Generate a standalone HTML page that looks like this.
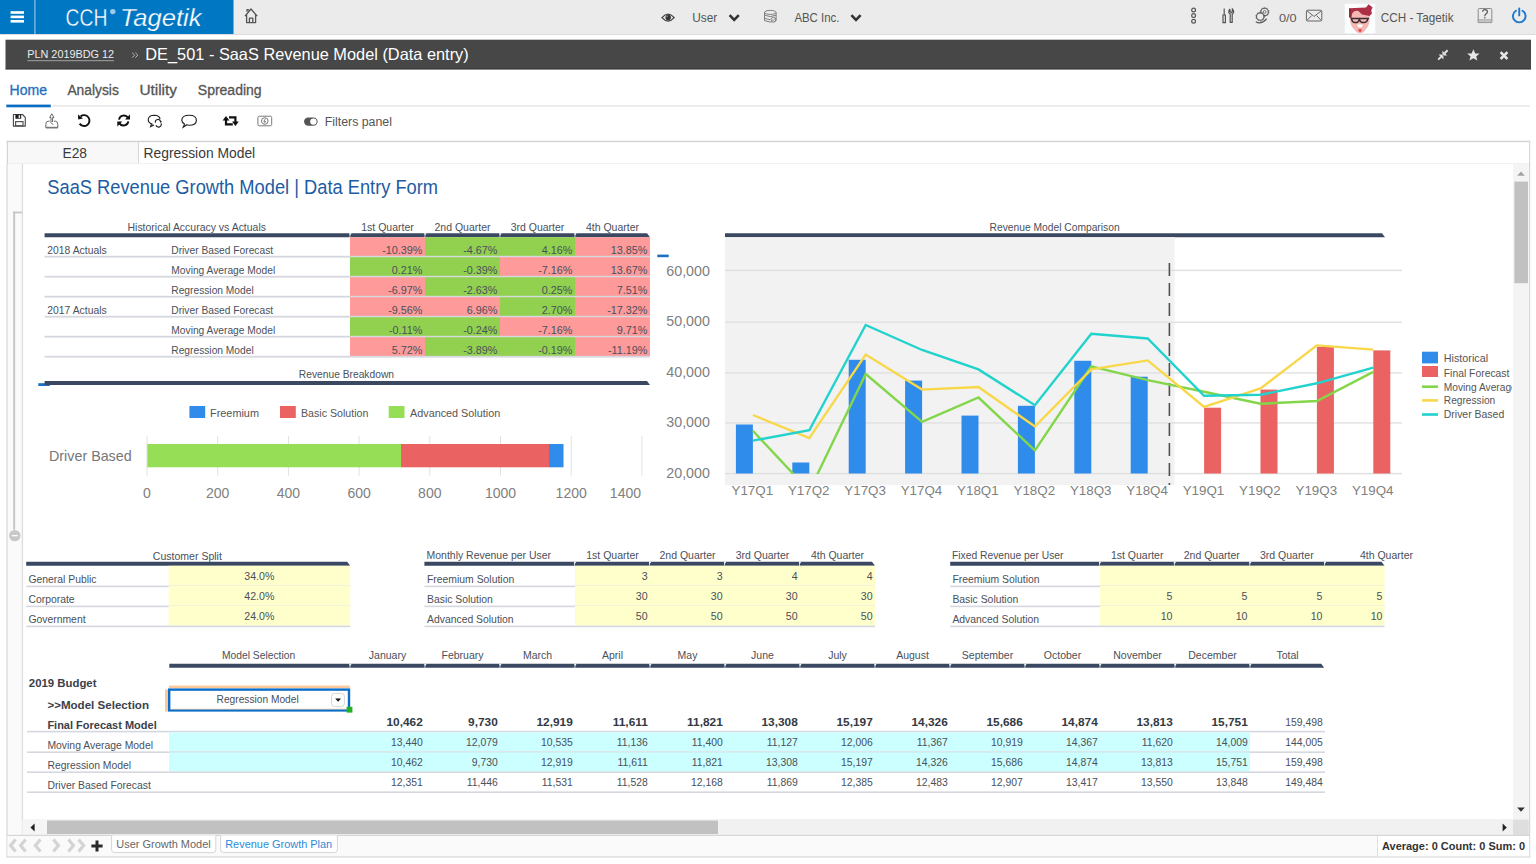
<!DOCTYPE html>
<html><head><meta charset="utf-8"><title>CCH Tagetik - SaaS Revenue Model</title>
<style>
html,body{margin:0;padding:0;background:#fff;overflow:hidden;width:1536px;height:864px}
svg{display:block;font-family:"Liberation Sans",sans-serif}
</style></head><body>
<svg width="1536" height="864" viewBox="0 0 1536 864">
<rect x="0" y="0" width="1536" height="34" fill="#ebebeb" />
<rect x="0" y="34" width="1536" height="1" fill="#dcdcdc" />
<rect x="0" y="0" width="233.5" height="34" fill="#0077c3" />
<rect x="34.2" y="0" width="1.4" height="34" fill="#7fb8e2" />
<rect x="10.6" y="11.2" width="13.4" height="2.6" fill="#ffffff" />
<rect x="10.6" y="15.6" width="13.4" height="2.6" fill="#ffffff" />
<rect x="10.6" y="20.0" width="13.4" height="2.6" fill="#ffffff" />
<text x="65.5" y="26" font-size="23.5" fill="#ffffff" textLength="41.9" lengthAdjust="spacingAndGlyphs" stroke="#0077c3" stroke-width="0.4">CCH</text>
<circle cx="112.8" cy="11.6" r="2.7" fill="#9ccbed"/>
<text x="120" y="26" font-size="23.5" fill="#ffffff" font-style="italic" textLength="81.6" lengthAdjust="spacingAndGlyphs" stroke="#0077c3" stroke-width="0.25">Tagetik</text>
<path d="M245 16.2 L251 9 L257.2 16.2 M246.6 14.4 V22.6 H255.6 V14.4 M249.4 22.6 V18.2 H252.8 V22.6 M247 11.8 V9.6 H248.4 V10.6" fill="none" stroke="#555" stroke-width="1.3" stroke-linejoin="round"/>
<path d="M662 17.6 Q668 10.8 674.2 17.6 Q668 24.4 662 17.6 Z" fill="#ebebeb" stroke="#444" stroke-width="1.3"/><circle cx="668.2" cy="17.4" r="2.7" fill="#333"/><circle cx="667.2" cy="16.4" r="0.8" fill="#888"/>
<text x="692.3" y="21.5" font-size="12.2" fill="#555" textLength="25" lengthAdjust="spacingAndGlyphs" >User</text>
<path d="M729.6 15.2 L734.2 19.8 L738.8 15.2" fill="none" stroke="#333" stroke-width="2.6"/>
<g fill="none" stroke="#777" stroke-width="0.95"><ellipse cx="770.3" cy="12.4" rx="5.8" ry="2"/><path d="M764.5 12.4 V20.6 Q770.3 23.6 776.1 20.6 V12.4 M764.5 15.2 Q770.3 18 776.1 15.2 M764.5 18 Q767 19.4 770 19.6"/><circle cx="773.4" cy="19.8" r="2.4" fill="#ebebeb"/><path d="M772.2 19.9 L773.2 20.8 L774.8 18.8" stroke-width="0.8"/></g>
<text x="794.4" y="21.5" font-size="12.2" fill="#555" textLength="45" lengthAdjust="spacingAndGlyphs" >ABC Inc.</text>
<path d="M851.4 15.2 L856 19.8 L860.6 15.2" fill="none" stroke="#333" stroke-width="2.6"/>
<g fill="none" stroke="#555" stroke-width="1.2"><circle cx="1193.6" cy="10" r="1.9"/><circle cx="1193.6" cy="15.6" r="1.9"/><circle cx="1193.6" cy="21.2" r="1.9"/></g>
<g fill="none" stroke="#555" stroke-width="1.2"><path d="M1224.2 8.5 V15 M1223 15 H1225.4 V22.6 H1223 Z"/><path d="M1230 9 V11.5 L1231.2 12.6 L1232.4 11.5 V9 Q1234 10.5 1233.6 12.6 L1232.2 14 V22.4 H1230.2 V14 L1228.8 12.6 Q1228.4 10.5 1230 9"/></g>
<g fill="none" stroke="#5a5a5a"><circle cx="1264.6" cy="11.9" r="3.7" stroke-width="1.1"/><circle cx="1264.6" cy="11.9" r="4.3" stroke-width="0.9" stroke-dasharray="1.3 1.4"/><circle cx="1264.6" cy="11.9" r="1.4" stroke-width="0.8"/><circle cx="1260.2" cy="16.6" r="3.7" stroke-width="1.1" fill="#ebebeb"/><circle cx="1260.2" cy="16.6" r="4.3" stroke-width="0.9" stroke-dasharray="1.3 1.4"/><path d="M1255.8 21.8 Q1261 25 1266.6 18.8" stroke-width="1.3"/></g>
<text x="1279" y="21.5" font-size="11.8" fill="#5a5a5a" textLength="17.7" lengthAdjust="spacingAndGlyphs" >0/0</text>
<g fill="none" stroke="#666" stroke-width="1"><rect x="1306.4" y="10.2" width="15.4" height="10.8" rx="1.2"/><path d="M1306.8 10.8 L1314.1 16.4 L1321.4 10.8 M1306.8 20.6 L1311.6 15.6 M1321.4 20.6 L1316.6 15.6"/></g>
<g><rect x="1344.8" y="3.8" width="30.4" height="29.5" fill="#fbfdfe"/>
<path d="M1350 10 H1369.8 V16 Q1370 25 1366 29 Q1363.4 33.4 1360 33.4 Q1357 33.4 1354 29 Q1349.6 26 1350 16 Z" fill="#f5b7b4"/>
<path d="M1349.4 8.2 L1366 7.6 L1368.6 4.2 L1372.6 7.6 L1371.2 10.6 L1372 13.6 L1369.4 16 L1362 14.6 L1358.4 11 Q1354 10.2 1352 14 L1351.4 18.4 L1349.6 17.6 Z" fill="#ad2f45"/>
<path d="M1349.8 8.4 V17.6" stroke="#5a2a1e" stroke-width="1.2"/>
<path d="M1350.6 18.6 H1369 M1351.6 18.8 Q1352 22.8 1355.4 22.6 Q1358.8 22.6 1359.4 18.8 Q1360 22.6 1363.6 22.6 Q1367 22.6 1367.8 18.8" fill="none" stroke="#3b2b33" stroke-width="1.5"/>
<path d="M1357 24.6 H1363 Q1362.6 27.4 1360 27.6 Q1357.4 27.4 1357 24.6 Z" fill="#fff"/>
<path d="M1358 29.4 Q1360 28.6 1362 29.4 Q1361.4 32 1360 32 Q1358.6 32 1358 29.4 Z" fill="#e8484e"/></g>
<text x="1380.8" y="21.7" font-size="12.2" fill="#555" textLength="72.7" lengthAdjust="spacingAndGlyphs" >CCH - Tagetik</text>
<rect x="1478.2" y="8.5" width="13.6" height="14" rx="1" fill="none" stroke="#8a8a8a" stroke-width="1"/><rect x="1477.8" y="19.3" width="14.4" height="3.8" fill="#a0a0a0"/><rect x="1479" y="20.2" width="12.4" height="1.6" fill="#c8ccd0"/>
<path d="M1482.6 11.6 Q1482.8 9.6 1485 9.6 Q1487.4 9.6 1487.4 11.8 Q1487.4 13.4 1485.6 14.2 Q1484.8 14.8 1484.8 16.2" fill="none" stroke="#555" stroke-width="1.2"/><circle cx="1484.8" cy="17.8" r="0.75" fill="#555"/>
<g fill="none" stroke="#1a78cf" stroke-width="1.9" stroke-linecap="round"><path d="M1516 10.7 A6.3 6.3 0 1 0 1522.5 10.7"/><path d="M1519.25 8.4 V15.4"/></g>
<rect x="5.5" y="39.7" width="1525.5" height="29.6" fill="#474747" />
<rect x="5.5" y="68.5" width="1525.5" height="0.9" fill="#333333" />
<text x="27.3" y="58" font-size="10.9" fill="#ececec" textLength="86.7" lengthAdjust="spacingAndGlyphs" >PLN 2019BDG 12</text>
<rect x="27.3" y="60.1" width="86.7" height="1.1" fill="#9a9a9a" />
<path d="M132.2 52.8 L134.6 55.2 L132.2 57.6 M135.4 52.8 L137.8 55.2 L135.4 57.6" fill="none" stroke="#bbb" stroke-width="1"/>
<text x="145.3" y="60.3" font-size="16.5" fill="#ffffff" textLength="323.4" lengthAdjust="spacingAndGlyphs" >DE_501 - SaaS Revenue Model (Data entry)</text>
<g stroke="#e2e2e2" stroke-width="2"><path d="M1447.6 50.2 L1444.6 53.2 M1438.2 59.6 L1441.2 56.6"/></g><path d="M1442.4 50.8 L1442.4 55.6 L1447.2 55.6 Z M1438.6 54.6 L1443.4 54.6 L1443.4 59.4 Z" fill="#e2e2e2"/>
<path d="M1473.4 49.2 L1475.2 53.4 L1479.6 53.6 L1476.2 56.4 L1477.4 60.6 L1473.4 58.2 L1469.4 60.6 L1470.6 56.4 L1467.2 53.6 L1471.6 53.4 Z" fill="#e8e8e8"/>
<path d="M1500.6 52.2 L1507.4 59 M1507.4 52.2 L1500.6 59" stroke="#e6e6e6" stroke-width="2.6"/>
<text x="9.5" y="94.6" font-size="14" fill="#1f6fbf" textLength="37.5" lengthAdjust="spacingAndGlyphs" stroke="#1f6fbf" stroke-width="0.3">Home</text>
<text x="67.4" y="94.6" font-size="14" fill="#555555" textLength="51.4" lengthAdjust="spacingAndGlyphs" stroke="#555" stroke-width="0.3">Analysis</text>
<text x="139.4" y="94.6" font-size="14" fill="#555555" textLength="37.6" lengthAdjust="spacingAndGlyphs" stroke="#555" stroke-width="0.3">Utility</text>
<text x="197.8" y="94.6" font-size="14" fill="#555555" textLength="63.8" lengthAdjust="spacingAndGlyphs" stroke="#555" stroke-width="0.3">Spreading</text>
<rect x="52" y="105" width="1478" height="2" fill="#ececec" />
<rect x="6.3" y="104.6" width="44.5" height="2.7" fill="#0a6dc2" />
<path d="M13.4 114.5 H22.4 L25.3 117.4 V126.1 H13.4 Z" fill="none" stroke="#444" stroke-width="1.1" stroke-linejoin="round"/><rect x="15.4" y="114.6" width="5.8" height="4.1" fill="#1a1a1a"/><rect x="18.6" y="115.3" width="1.5" height="2.6" fill="#fff"/><rect x="15.6" y="121.6" width="7.4" height="4.2" fill="none" stroke="#555" stroke-width="1.2"/>
<g fill="none" stroke="#666" stroke-width="1"><path d="M51.8 113.8 L49.7 117.6 L51 117.6 L51 122.6 L53.2 124.8 M51.8 113.8 L53.9 117.6 L52.6 117.6 L52.6 122"/><path d="M49.6 121.2 H48 Q45.8 121.4 45.8 124.6 V127.6 H57.8 V124.6 Q57.8 121.4 55.6 121.2 H54"/></g><rect x="45.8" y="126.8" width="12" height="1.6" fill="#777"/>
<g fill="none" stroke="#111" stroke-width="1.9"><path d="M80.6 116.4 A5.4 5.4 0 1 1 79.6 123.6"/></g><path d="M78 114.4 L78.2 119.6 L83 118.6 Z" fill="#111"/>
<g fill="none" stroke="#111" stroke-width="1.9"><path d="M119 119.6 A5 5 0 0 1 128 117.6"/><path d="M128.4 121.4 A5 5 0 0 1 119.4 123.4"/></g><path d="M130 114.4 V119.6 H125 Z M117.3 126.6 V121.4 H122.3 Z" fill="#111"/>
<g fill="none" stroke="#222" stroke-width="1.15"><path d="M152.6 124.4 Q148.2 123 148.2 119.8 Q148.4 115.2 154.4 115.2 Q159.8 115.4 160 119"/><path d="M151.4 124.2 L150.6 126.6 L154 125"/><path d="M155.4 122.6 A2.6 2.6 0 0 1 160.6 121.6 M161.2 123.4 A2.6 2.6 0 0 1 156 125.2"/></g><path d="M159.6 120.4 L161.8 121.2 L160.6 123.2 Z" fill="#222"/>
<g fill="none" stroke="#222" stroke-width="1.15"><path d="M184.6 124 Q181.8 122.6 181.8 120.2 Q181.8 115.2 189.2 115.2 Q196.4 115.2 196.4 120.2 Q196.4 125.2 189.2 125.2 Q187.2 125.2 185.8 124.8"/><path d="M184.6 124 L183.2 127.2 L186.6 125"/></g>
<g fill="none" stroke="#111" stroke-width="2.2"><path d="M226 119.4 V124.4 H232.8 M229 117.3 H235.4 V122.2"/></g><path d="M222.6 120.4 L226 116 L229.4 120.4 Z M232 121.6 L235.4 126 L238.8 121.6 Z" fill="#111"/>
<g fill="none" stroke="#7a7a7a" stroke-width="1"><rect x="257.9" y="116.2" width="13.8" height="9.6" rx="1.4"/><circle cx="264.8" cy="121" r="3.3"/></g><path d="M265.4 118.8 L263.8 121.4 H265.6 L264.2 123.4" fill="none" stroke="#666" stroke-width="0.8"/>
<rect x="304" y="117.4" width="13.6" height="8.4" rx="4.2" fill="#555"/><circle cx="313.4" cy="121.6" r="3.2" fill="#fff"/>
<text x="324.7" y="126.1" font-size="12.3" fill="#555" textLength="67.3" lengthAdjust="spacingAndGlyphs" >Filters panel</text>
<rect x="7" y="141" width="1523" height="23" fill="#ffffff" />
<rect x="8" y="142.2" width="130" height="21.2" fill="#f8f8f8" />
<rect x="6.8" y="140.7" width="1523.5" height="1.5" fill="#d3d3d3" />
<rect x="6.8" y="140.7" width="1.2" height="24" fill="#d3d3d3" />
<rect x="6.8" y="163.7" width="1523.5" height="1.3" fill="#d3d3d3" />
<rect x="138" y="142" width="1" height="21.4" fill="#d8d8d8" />
<text x="62.5" y="157.8" font-size="14.6" fill="#3a3a3a" textLength="24.5" lengthAdjust="spacingAndGlyphs" >E28</text>
<text x="143.5" y="157.8" font-size="14.2" fill="#3a3a3a" textLength="111.7" lengthAdjust="spacingAndGlyphs" >Regression Model</text>
<rect x="7" y="164" width="1523" height="693" fill="#ffffff" />
<rect x="7" y="164" width="15.5" height="671" fill="#fafafa" />
<rect x="6.4" y="164" width="1.3" height="693" fill="#dadada" />
<rect x="21.8" y="164" width="1.3" height="671" fill="#dcdcdc" />
<rect x="1529" y="141" width="1.2" height="716" fill="#d8d8d8" />
<rect x="13.2" y="211.6" width="8.6" height="1.8" fill="#c6c6c6" />
<rect x="13.2" y="211.6" width="1.9" height="318" fill="#c6c6c6" />
<circle cx="14.8" cy="535.6" r="5.7" fill="#c8c8c8"/>
<rect x="11.8" y="535" width="6" height="1.3" fill="#ffffff" />
<text x="47.3" y="194.2" font-size="19.3" fill="#1d5ca2" textLength="390.8" lengthAdjust="spacingAndGlyphs" >SaaS Revenue Growth Model | Data Entry Form</text>
<text x="127.5" y="231" font-size="10.5" fill="#4a505a" textLength="138.5" lengthAdjust="spacingAndGlyphs" >Historical Accuracy vs Actuals</text>
<text x="387.5" y="231" font-size="10.5" fill="#4a505a" text-anchor="middle" textLength="52.5" lengthAdjust="spacingAndGlyphs" >1st Quarter</text>
<text x="462.5" y="231" font-size="10.5" fill="#4a505a" text-anchor="middle" textLength="56.0" lengthAdjust="spacingAndGlyphs" >2nd Quarter</text>
<text x="537.5" y="231" font-size="10.5" fill="#4a505a" text-anchor="middle" textLength="53.7" lengthAdjust="spacingAndGlyphs" >3rd Quarter</text>
<text x="612.5" y="231" font-size="10.5" fill="#4a505a" text-anchor="middle" textLength="53.1" lengthAdjust="spacingAndGlyphs" >4th Quarter</text>
<polygon points="44.6,233.2 647,233.2 650,237.2 44.6,237.2" fill="#3a4862"/>
<polygon points="349.5,233.2 351.6,233.2 350.6,234.79999999999998 349.5,234.79999999999998" fill="#fff"/>
<rect x="349.5" y="233.2" width="0.9" height="4" fill="#ffffff" opacity="0.8"/>
<polygon points="424.5,233.2 426.6,233.2 425.6,234.79999999999998 424.5,234.79999999999998" fill="#fff"/>
<rect x="424.5" y="233.2" width="0.9" height="4" fill="#ffffff" opacity="0.8"/>
<polygon points="499.5,233.2 501.6,233.2 500.6,234.79999999999998 499.5,234.79999999999998" fill="#fff"/>
<rect x="499.5" y="233.2" width="0.9" height="4" fill="#ffffff" opacity="0.8"/>
<polygon points="574.5,233.2 576.6,233.2 575.6,234.79999999999998 574.5,234.79999999999998" fill="#fff"/>
<rect x="574.5" y="233.2" width="0.9" height="4" fill="#ffffff" opacity="0.8"/>
<rect x="350" y="237.2" width="75" height="19.2" fill="#ff9a9a" />
<rect x="425" y="237.2" width="75" height="19.2" fill="#92d050" />
<rect x="500" y="237.2" width="75" height="19.2" fill="#92d050" />
<rect x="575" y="237.2" width="75" height="19.2" fill="#ff9a9a" />
<rect x="44.6" y="255.79999999999998" width="605.4" height="1.8" fill="#d5d8de" />
<text x="47.3" y="254.2" font-size="10.4" fill="#4a505a" textLength="59.4" lengthAdjust="spacingAndGlyphs" >2018 Actuals</text>
<text x="171.3" y="254.2" font-size="10.4" fill="#4a505a" textLength="101.8" lengthAdjust="spacingAndGlyphs" >Driver Based Forecast</text>
<text x="422.4" y="254.2" font-size="10.8" fill="#4a505a" text-anchor="end" >-10.39%</text>
<text x="497.4" y="254.2" font-size="10.8" fill="#4a505a" text-anchor="end" >-4.67%</text>
<text x="572.4" y="254.2" font-size="10.8" fill="#4a505a" text-anchor="end" >4.16%</text>
<text x="647.4" y="254.2" font-size="10.8" fill="#4a505a" text-anchor="end" >13.85%</text>
<rect x="350" y="257.2" width="75" height="19.2" fill="#92d050" />
<rect x="425" y="257.2" width="75" height="19.2" fill="#92d050" />
<rect x="500" y="257.2" width="75" height="19.2" fill="#ff9a9a" />
<rect x="575" y="257.2" width="75" height="19.2" fill="#ff9a9a" />
<rect x="44.6" y="275.8" width="605.4" height="1.8" fill="#d5d8de" />
<text x="171.3" y="274.2" font-size="10.4" fill="#4a505a" textLength="103.9" lengthAdjust="spacingAndGlyphs" >Moving Average Model</text>
<text x="422.4" y="274.2" font-size="10.8" fill="#4a505a" text-anchor="end" >0.21%</text>
<text x="497.4" y="274.2" font-size="10.8" fill="#4a505a" text-anchor="end" >-0.39%</text>
<text x="572.4" y="274.2" font-size="10.8" fill="#4a505a" text-anchor="end" >-7.16%</text>
<text x="647.4" y="274.2" font-size="10.8" fill="#4a505a" text-anchor="end" >13.67%</text>
<rect x="350" y="277.2" width="75" height="19.2" fill="#ff9a9a" />
<rect x="425" y="277.2" width="75" height="19.2" fill="#92d050" />
<rect x="500" y="277.2" width="75" height="19.2" fill="#92d050" />
<rect x="575" y="277.2" width="75" height="19.2" fill="#ff9a9a" />
<rect x="44.6" y="295.8" width="605.4" height="1.8" fill="#d5d8de" />
<text x="171.3" y="294.2" font-size="10.4" fill="#4a505a" textLength="82.4" lengthAdjust="spacingAndGlyphs" >Regression Model</text>
<text x="422.4" y="294.2" font-size="10.8" fill="#4a505a" text-anchor="end" >-6.97%</text>
<text x="497.4" y="294.2" font-size="10.8" fill="#4a505a" text-anchor="end" >-2.63%</text>
<text x="572.4" y="294.2" font-size="10.8" fill="#4a505a" text-anchor="end" >0.25%</text>
<text x="647.4" y="294.2" font-size="10.8" fill="#4a505a" text-anchor="end" >7.51%</text>
<rect x="350" y="297.2" width="75" height="19.2" fill="#ff9a9a" />
<rect x="425" y="297.2" width="75" height="19.2" fill="#ff9a9a" />
<rect x="500" y="297.2" width="75" height="19.2" fill="#92d050" />
<rect x="575" y="297.2" width="75" height="19.2" fill="#ff9a9a" />
<rect x="44.6" y="315.8" width="605.4" height="1.8" fill="#d5d8de" />
<text x="47.3" y="314.2" font-size="10.4" fill="#4a505a" textLength="59.4" lengthAdjust="spacingAndGlyphs" >2017 Actuals</text>
<text x="171.3" y="314.2" font-size="10.4" fill="#4a505a" textLength="101.8" lengthAdjust="spacingAndGlyphs" >Driver Based Forecast</text>
<text x="422.4" y="314.2" font-size="10.8" fill="#4a505a" text-anchor="end" >-9.56%</text>
<text x="497.4" y="314.2" font-size="10.8" fill="#4a505a" text-anchor="end" >6.96%</text>
<text x="572.4" y="314.2" font-size="10.8" fill="#4a505a" text-anchor="end" >2.70%</text>
<text x="647.4" y="314.2" font-size="10.8" fill="#4a505a" text-anchor="end" >-17.32%</text>
<rect x="350" y="317.2" width="75" height="19.2" fill="#92d050" />
<rect x="425" y="317.2" width="75" height="19.2" fill="#92d050" />
<rect x="500" y="317.2" width="75" height="19.2" fill="#ff9a9a" />
<rect x="575" y="317.2" width="75" height="19.2" fill="#ff9a9a" />
<rect x="44.6" y="335.8" width="605.4" height="1.8" fill="#d5d8de" />
<text x="171.3" y="334.2" font-size="10.4" fill="#4a505a" textLength="103.9" lengthAdjust="spacingAndGlyphs" >Moving Average Model</text>
<text x="422.4" y="334.2" font-size="10.8" fill="#4a505a" text-anchor="end" >-0.11%</text>
<text x="497.4" y="334.2" font-size="10.8" fill="#4a505a" text-anchor="end" >-0.24%</text>
<text x="572.4" y="334.2" font-size="10.8" fill="#4a505a" text-anchor="end" >-7.16%</text>
<text x="647.4" y="334.2" font-size="10.8" fill="#4a505a" text-anchor="end" >9.71%</text>
<rect x="350" y="337.2" width="75" height="19.2" fill="#ff9a9a" />
<rect x="425" y="337.2" width="75" height="19.2" fill="#92d050" />
<rect x="500" y="337.2" width="75" height="19.2" fill="#92d050" />
<rect x="575" y="337.2" width="75" height="19.2" fill="#ff9a9a" />
<rect x="44.6" y="355.8" width="605.4" height="1.8" fill="#d5d8de" />
<text x="171.3" y="354.2" font-size="10.4" fill="#4a505a" textLength="82.4" lengthAdjust="spacingAndGlyphs" >Regression Model</text>
<text x="422.4" y="354.2" font-size="10.8" fill="#4a505a" text-anchor="end" >5.72%</text>
<text x="497.4" y="354.2" font-size="10.8" fill="#4a505a" text-anchor="end" >-3.89%</text>
<text x="572.4" y="354.2" font-size="10.8" fill="#4a505a" text-anchor="end" >-0.19%</text>
<text x="647.4" y="354.2" font-size="10.8" fill="#4a505a" text-anchor="end" >-11.19%</text>
<rect x="657.3" y="254.6" width="11.4" height="2.6" fill="#1c6fc2" />
<rect x="38.3" y="383.2" width="11.5" height="2.8" fill="#1c6fc2" />
<text x="298.8" y="378.2" font-size="10.4" fill="#4a505a" textLength="95.2" lengthAdjust="spacingAndGlyphs" >Revenue Breakdown</text>
<polygon points="44.6,381 647,381 650,385 44.6,385" fill="#3a4862"/>
<rect x="189.4" y="406" width="15.8" height="12" fill="#2f8ceb" />
<text x="210" y="416.7" font-size="10.9" fill="#555" textLength="49" lengthAdjust="spacingAndGlyphs" >Freemium</text>
<rect x="280" y="406" width="15.8" height="12" fill="#ea6262" />
<text x="301" y="416.7" font-size="10.9" fill="#555" textLength="67.3" lengthAdjust="spacingAndGlyphs" >Basic Solution</text>
<rect x="388.7" y="406" width="15.8" height="12" fill="#97de57" />
<text x="410" y="416.7" font-size="10.9" fill="#555" textLength="90.2" lengthAdjust="spacingAndGlyphs" >Advanced Solution</text>
<rect x="146.5" y="436" width="1" height="39.6" fill="#e2e2e2" />
<rect x="217.2" y="436" width="1" height="39.6" fill="#e2e2e2" />
<rect x="287.9" y="436" width="1" height="39.6" fill="#e2e2e2" />
<rect x="358.6" y="436" width="1" height="39.6" fill="#e2e2e2" />
<rect x="429.3" y="436" width="1" height="39.6" fill="#e2e2e2" />
<rect x="500.0" y="436" width="1" height="39.6" fill="#e2e2e2" />
<rect x="570.7" y="436" width="1" height="39.6" fill="#e2e2e2" />
<rect x="641.4000000000001" y="436" width="1" height="39.6" fill="#e2e2e2" />
<rect x="147.3" y="444" width="253.7" height="23.3" fill="#97de57" />
<rect x="401" y="444" width="148" height="23.3" fill="#ea6262" />
<rect x="549" y="444" width="14.5" height="23.3" fill="#2f8ceb" />
<text x="49" y="460.6" font-size="14.3" fill="#777" textLength="82.7" lengthAdjust="spacingAndGlyphs" >Driver Based</text>
<text x="147.0" y="497.5" font-size="14" fill="#808080" text-anchor="middle" >0</text>
<text x="217.7" y="497.5" font-size="14" fill="#808080" text-anchor="middle" >200</text>
<text x="288.4" y="497.5" font-size="14" fill="#808080" text-anchor="middle" >400</text>
<text x="359.1" y="497.5" font-size="14" fill="#808080" text-anchor="middle" >600</text>
<text x="429.8" y="497.5" font-size="14" fill="#808080" text-anchor="middle" >800</text>
<text x="500.5" y="497.5" font-size="14" fill="#808080" text-anchor="middle" >1000</text>
<text x="571.2" y="497.5" font-size="14" fill="#808080" text-anchor="middle" >1200</text>
<text x="641" y="497.5" font-size="14" fill="#808080" text-anchor="end" >1400</text>
<text x="152.8" y="559.5" font-size="10.5" fill="#4a505a" textLength="69.1" lengthAdjust="spacingAndGlyphs" >Customer Split</text>
<polygon points="26.2,561.8 347.2,561.8 350.2,565.8 26.2,565.8" fill="#3a4862"/>
<rect x="168.7" y="565.8" width="181.5" height="19.8" fill="#ffffcc" />
<rect x="26.2" y="585.5999999999999" width="324" height="1.6" fill="#d5d8de" />
<text x="28.4" y="583.1999999999999" font-size="10.4" fill="#4a505a" >General Public</text>
<text x="259.3" y="580.3" font-size="10.6" fill="#4a505a" text-anchor="middle" >34.0%</text>
<rect x="168.7" y="585.8" width="181.5" height="19.8" fill="#ffffcc" />
<rect x="26.2" y="605.5999999999999" width="324" height="1.6" fill="#d5d8de" />
<text x="28.4" y="603.1999999999999" font-size="10.4" fill="#4a505a" >Corporate</text>
<text x="259.3" y="600.3" font-size="10.6" fill="#4a505a" text-anchor="middle" >42.0%</text>
<rect x="168.7" y="605.8" width="181.5" height="19.8" fill="#ffffcc" />
<rect x="26.2" y="625.5999999999999" width="324" height="1.6" fill="#d5d8de" />
<text x="28.4" y="623.1999999999999" font-size="10.4" fill="#4a505a" >Government</text>
<text x="259.3" y="620.3" font-size="10.6" fill="#4a505a" text-anchor="middle" >24.0%</text>
<text x="426.6" y="559" font-size="10.4" fill="#4a505a" textLength="124.4" lengthAdjust="spacingAndGlyphs" >Monthly Revenue per User</text>
<text x="612.5" y="559" font-size="10.5" fill="#4a505a" text-anchor="middle" >1st Quarter</text>
<text x="687.5" y="559" font-size="10.5" fill="#4a505a" text-anchor="middle" >2nd Quarter</text>
<text x="762.5" y="559" font-size="10.5" fill="#4a505a" text-anchor="middle" >3rd Quarter</text>
<text x="837.5" y="559" font-size="10.5" fill="#4a505a" text-anchor="middle" >4th Quarter</text>
<polygon points="424.4,561.8 872,561.8 875,565.8 424.4,565.8" fill="#3a4862"/>
<polygon points="574.1,561.8 576.2,561.8 575.2,563.4 574.1,563.4" fill="#fff"/>
<rect x="574.1" y="561.8" width="0.9" height="4" fill="#ffffff" opacity="0.8"/>
<polygon points="649.1,561.8 651.2,561.8 650.2,563.4 649.1,563.4" fill="#fff"/>
<rect x="649.1" y="561.8" width="0.9" height="4" fill="#ffffff" opacity="0.8"/>
<polygon points="724.1,561.8 726.2,561.8 725.2,563.4 724.1,563.4" fill="#fff"/>
<rect x="724.1" y="561.8" width="0.9" height="4" fill="#ffffff" opacity="0.8"/>
<polygon points="799.1,561.8 801.2,561.8 800.2,563.4 799.1,563.4" fill="#fff"/>
<rect x="799.1" y="561.8" width="0.9" height="4" fill="#ffffff" opacity="0.8"/>
<rect x="575" y="565.8" width="300" height="19.8" fill="#ffffcc" />
<rect x="424.4" y="585.5999999999999" width="450.6" height="1.6" fill="#d5d8de" />
<text x="427" y="583.0" font-size="10.4" fill="#4a505a" >Freemium Solution</text>
<text x="647.6" y="580.0999999999999" font-size="10.6" fill="#4a505a" text-anchor="end" >3</text>
<text x="722.6" y="580.0999999999999" font-size="10.6" fill="#4a505a" text-anchor="end" >3</text>
<text x="797.6" y="580.0999999999999" font-size="10.6" fill="#4a505a" text-anchor="end" >4</text>
<text x="872.6" y="580.0999999999999" font-size="10.6" fill="#4a505a" text-anchor="end" >4</text>
<rect x="575" y="585.8" width="300" height="19.8" fill="#ffffcc" />
<rect x="424.4" y="605.5999999999999" width="450.6" height="1.6" fill="#d5d8de" />
<text x="427" y="603.0" font-size="10.4" fill="#4a505a" >Basic Solution</text>
<text x="647.6" y="600.0999999999999" font-size="10.6" fill="#4a505a" text-anchor="end" >30</text>
<text x="722.6" y="600.0999999999999" font-size="10.6" fill="#4a505a" text-anchor="end" >30</text>
<text x="797.6" y="600.0999999999999" font-size="10.6" fill="#4a505a" text-anchor="end" >30</text>
<text x="872.6" y="600.0999999999999" font-size="10.6" fill="#4a505a" text-anchor="end" >30</text>
<rect x="575" y="605.8" width="300" height="19.8" fill="#ffffcc" />
<rect x="424.4" y="625.5999999999999" width="450.6" height="1.6" fill="#d5d8de" />
<text x="427" y="623.0" font-size="10.4" fill="#4a505a" >Advanced Solution</text>
<text x="647.6" y="620.0999999999999" font-size="10.6" fill="#4a505a" text-anchor="end" >50</text>
<text x="722.6" y="620.0999999999999" font-size="10.6" fill="#4a505a" text-anchor="end" >50</text>
<text x="797.6" y="620.0999999999999" font-size="10.6" fill="#4a505a" text-anchor="end" >50</text>
<text x="872.6" y="620.0999999999999" font-size="10.6" fill="#4a505a" text-anchor="end" >50</text>
<text x="952" y="559" font-size="10.4" fill="#4a505a" textLength="111.5" lengthAdjust="spacingAndGlyphs" >Fixed Revenue per User</text>
<text x="1137.2" y="559" font-size="10.5" fill="#4a505a" text-anchor="middle" >1st Quarter</text>
<text x="1211.8" y="559" font-size="10.5" fill="#4a505a" text-anchor="middle" >2nd Quarter</text>
<text x="1286.8" y="559" font-size="10.5" fill="#4a505a" text-anchor="middle" >3rd Quarter</text>
<text x="1386.5" y="559" font-size="10.5" fill="#4a505a" text-anchor="middle" >4th Quarter</text>
<polygon points="950.2,561.8 1381.5,561.8 1384.5,565.8 950.2,565.8" fill="#3a4862"/>
<polygon points="1099.1,561.8 1101.1999999999998,561.8 1100.1999999999998,563.4 1099.1,563.4" fill="#fff"/>
<rect x="1099.1" y="561.8" width="0.9" height="4" fill="#ffffff" opacity="0.8"/>
<polygon points="1173.9,561.8 1176.0,561.8 1175.0,563.4 1173.9,563.4" fill="#fff"/>
<rect x="1173.9" y="561.8" width="0.9" height="4" fill="#ffffff" opacity="0.8"/>
<polygon points="1249.3,561.8 1251.3999999999999,561.8 1250.3999999999999,563.4 1249.3,563.4" fill="#fff"/>
<rect x="1249.3" y="561.8" width="0.9" height="4" fill="#ffffff" opacity="0.8"/>
<polygon points="1324.1,561.8 1326.1999999999998,561.8 1325.1999999999998,563.4 1324.1,563.4" fill="#fff"/>
<rect x="1324.1" y="561.8" width="0.9" height="4" fill="#ffffff" opacity="0.8"/>
<rect x="1100" y="565.8" width="284.5" height="19.8" fill="#ffffcc" />
<rect x="950.2" y="585.5999999999999" width="434.3" height="1.6" fill="#d5d8de" />
<text x="952.4" y="583.0" font-size="10.4" fill="#4a505a" >Freemium Solution</text>
<rect x="1100" y="585.8" width="284.5" height="19.8" fill="#ffffcc" />
<rect x="950.2" y="605.5999999999999" width="434.3" height="1.6" fill="#d5d8de" />
<text x="952.4" y="603.0" font-size="10.4" fill="#4a505a" >Basic Solution</text>
<text x="1172.5" y="600.0999999999999" font-size="10.6" fill="#4a505a" text-anchor="end" >5</text>
<text x="1247.5" y="600.0999999999999" font-size="10.6" fill="#4a505a" text-anchor="end" >5</text>
<text x="1322.5" y="600.0999999999999" font-size="10.6" fill="#4a505a" text-anchor="end" >5</text>
<text x="1382.5" y="600.0999999999999" font-size="10.6" fill="#4a505a" text-anchor="end" >5</text>
<rect x="1100" y="605.8" width="284.5" height="19.8" fill="#ffffcc" />
<rect x="950.2" y="625.5999999999999" width="434.3" height="1.6" fill="#d5d8de" />
<text x="952.4" y="623.0" font-size="10.4" fill="#4a505a" >Advanced Solution</text>
<text x="1172.5" y="620.0999999999999" font-size="10.6" fill="#4a505a" text-anchor="end" >10</text>
<text x="1247.5" y="620.0999999999999" font-size="10.6" fill="#4a505a" text-anchor="end" >10</text>
<text x="1322.5" y="620.0999999999999" font-size="10.6" fill="#4a505a" text-anchor="end" >10</text>
<text x="1382.5" y="620.0999999999999" font-size="10.6" fill="#4a505a" text-anchor="end" >10</text>
<text x="258.6" y="659" font-size="10.5" fill="#4a505a" text-anchor="middle" textLength="73.2" lengthAdjust="spacingAndGlyphs" >Model Selection</text>
<text x="387.5" y="659" font-size="10.5" fill="#4a505a" text-anchor="middle" >January</text>
<text x="462.5" y="659" font-size="10.5" fill="#4a505a" text-anchor="middle" >February</text>
<text x="537.5" y="659" font-size="10.5" fill="#4a505a" text-anchor="middle" >March</text>
<text x="612.5" y="659" font-size="10.5" fill="#4a505a" text-anchor="middle" >April</text>
<text x="687.5" y="659" font-size="10.5" fill="#4a505a" text-anchor="middle" >May</text>
<text x="762.5" y="659" font-size="10.5" fill="#4a505a" text-anchor="middle" >June</text>
<text x="837.5" y="659" font-size="10.5" fill="#4a505a" text-anchor="middle" >July</text>
<text x="912.5" y="659" font-size="10.5" fill="#4a505a" text-anchor="middle" >August</text>
<text x="987.5" y="659" font-size="10.5" fill="#4a505a" text-anchor="middle" >September</text>
<text x="1062.5" y="659" font-size="10.5" fill="#4a505a" text-anchor="middle" >October</text>
<text x="1137.5" y="659" font-size="10.5" fill="#4a505a" text-anchor="middle" >November</text>
<text x="1212.5" y="659" font-size="10.5" fill="#4a505a" text-anchor="middle" >December</text>
<text x="1287.5" y="659" font-size="10.5" fill="#4a505a" text-anchor="middle" >Total</text>
<polygon points="169.3,663.8 1321.2,663.8 1324.2,667.8 169.3,667.8" fill="#3a4862"/>
<polygon points="349.5,663.8 351.6,663.8 350.6,665.4 349.5,665.4" fill="#fff"/>
<rect x="349.5" y="663.8" width="0.9" height="4" fill="#ffffff" opacity="0.8"/>
<polygon points="424.5,663.8 426.6,663.8 425.6,665.4 424.5,665.4" fill="#fff"/>
<rect x="424.5" y="663.8" width="0.9" height="4" fill="#ffffff" opacity="0.8"/>
<polygon points="499.5,663.8 501.6,663.8 500.6,665.4 499.5,665.4" fill="#fff"/>
<rect x="499.5" y="663.8" width="0.9" height="4" fill="#ffffff" opacity="0.8"/>
<polygon points="574.5,663.8 576.6,663.8 575.6,665.4 574.5,665.4" fill="#fff"/>
<rect x="574.5" y="663.8" width="0.9" height="4" fill="#ffffff" opacity="0.8"/>
<polygon points="649.5,663.8 651.6,663.8 650.6,665.4 649.5,665.4" fill="#fff"/>
<rect x="649.5" y="663.8" width="0.9" height="4" fill="#ffffff" opacity="0.8"/>
<polygon points="724.5,663.8 726.6,663.8 725.6,665.4 724.5,665.4" fill="#fff"/>
<rect x="724.5" y="663.8" width="0.9" height="4" fill="#ffffff" opacity="0.8"/>
<polygon points="799.5,663.8 801.6,663.8 800.6,665.4 799.5,665.4" fill="#fff"/>
<rect x="799.5" y="663.8" width="0.9" height="4" fill="#ffffff" opacity="0.8"/>
<polygon points="874.5,663.8 876.6,663.8 875.6,665.4 874.5,665.4" fill="#fff"/>
<rect x="874.5" y="663.8" width="0.9" height="4" fill="#ffffff" opacity="0.8"/>
<polygon points="949.5,663.8 951.6,663.8 950.6,665.4 949.5,665.4" fill="#fff"/>
<rect x="949.5" y="663.8" width="0.9" height="4" fill="#ffffff" opacity="0.8"/>
<polygon points="1024.5,663.8 1026.6,663.8 1025.6,665.4 1024.5,665.4" fill="#fff"/>
<rect x="1024.5" y="663.8" width="0.9" height="4" fill="#ffffff" opacity="0.8"/>
<polygon points="1099.5,663.8 1101.6,663.8 1100.6,665.4 1099.5,665.4" fill="#fff"/>
<rect x="1099.5" y="663.8" width="0.9" height="4" fill="#ffffff" opacity="0.8"/>
<polygon points="1174.5,663.8 1176.6,663.8 1175.6,665.4 1174.5,665.4" fill="#fff"/>
<rect x="1174.5" y="663.8" width="0.9" height="4" fill="#ffffff" opacity="0.8"/>
<polygon points="1249.5,663.8 1251.6,663.8 1250.6,665.4 1249.5,665.4" fill="#fff"/>
<rect x="1249.5" y="663.8" width="0.9" height="4" fill="#ffffff" opacity="0.8"/>
<text x="28.8" y="687.4" font-size="11.2" fill="#3a414b" font-weight="bold" textLength="67.7" lengthAdjust="spacingAndGlyphs" >2019 Budget</text>
<text x="47.4" y="709.4" font-size="11.2" fill="#3a414b" font-weight="bold" textLength="101.6" lengthAdjust="spacingAndGlyphs" >&gt;&gt;Model Selection</text>
<text x="47.4" y="728.7" font-size="11.2" fill="#3a414b" font-weight="bold" textLength="109.3" lengthAdjust="spacingAndGlyphs" >Final Forecast Model</text>
<text x="422.8" y="725.7" font-size="10.8" fill="#333a44" text-anchor="end" font-weight="bold" textLength="36.3" lengthAdjust="spacingAndGlyphs" >10,462</text>
<text x="497.8" y="725.7" font-size="10.8" fill="#333a44" text-anchor="end" font-weight="bold" textLength="29.7" lengthAdjust="spacingAndGlyphs" >9,730</text>
<text x="572.8" y="725.7" font-size="10.8" fill="#333a44" text-anchor="end" font-weight="bold" textLength="36.3" lengthAdjust="spacingAndGlyphs" >12,919</text>
<text x="647.8" y="725.7" font-size="10.8" fill="#333a44" text-anchor="end" font-weight="bold" textLength="35.0" lengthAdjust="spacingAndGlyphs" >11,611</text>
<text x="722.8" y="725.7" font-size="10.8" fill="#333a44" text-anchor="end" font-weight="bold" textLength="35.7" lengthAdjust="spacingAndGlyphs" >11,821</text>
<text x="797.8" y="725.7" font-size="10.8" fill="#333a44" text-anchor="end" font-weight="bold" textLength="36.3" lengthAdjust="spacingAndGlyphs" >13,308</text>
<text x="872.8" y="725.7" font-size="10.8" fill="#333a44" text-anchor="end" font-weight="bold" textLength="36.3" lengthAdjust="spacingAndGlyphs" >15,197</text>
<text x="947.8" y="725.7" font-size="10.8" fill="#333a44" text-anchor="end" font-weight="bold" textLength="36.3" lengthAdjust="spacingAndGlyphs" >14,326</text>
<text x="1022.8" y="725.7" font-size="10.8" fill="#333a44" text-anchor="end" font-weight="bold" textLength="36.3" lengthAdjust="spacingAndGlyphs" >15,686</text>
<text x="1097.8" y="725.7" font-size="10.8" fill="#333a44" text-anchor="end" font-weight="bold" textLength="36.3" lengthAdjust="spacingAndGlyphs" >14,874</text>
<text x="1172.8" y="725.7" font-size="10.8" fill="#333a44" text-anchor="end" font-weight="bold" textLength="36.3" lengthAdjust="spacingAndGlyphs" >13,813</text>
<text x="1247.8" y="725.7" font-size="10.8" fill="#333a44" text-anchor="end" font-weight="bold" textLength="36.3" lengthAdjust="spacingAndGlyphs" >15,751</text>
<text x="1322.8" y="725.7" font-size="10.4" fill="#4a505a" text-anchor="end" >159,498</text>
<rect x="27" y="730.8" width="1298" height="1.6" fill="#d5d8de" />
<rect x="169" y="732.4" width="1081" height="19" fill="#ccffff" />
<rect x="27" y="751.4" width="1298" height="1.6" fill="#d5d8de" />
<text x="47.4" y="749.0" font-size="10.4" fill="#4a505a" textLength="105.6" lengthAdjust="spacingAndGlyphs" >Moving Average Model</text>
<text x="422.8" y="746.1999999999999" font-size="10.4" fill="#4a505a" text-anchor="end" >13,440</text>
<text x="497.8" y="746.1999999999999" font-size="10.4" fill="#4a505a" text-anchor="end" >12,079</text>
<text x="572.8" y="746.1999999999999" font-size="10.4" fill="#4a505a" text-anchor="end" >10,535</text>
<text x="647.8" y="746.1999999999999" font-size="10.4" fill="#4a505a" text-anchor="end" >11,136</text>
<text x="722.8" y="746.1999999999999" font-size="10.4" fill="#4a505a" text-anchor="end" >11,400</text>
<text x="797.8" y="746.1999999999999" font-size="10.4" fill="#4a505a" text-anchor="end" >11,127</text>
<text x="872.8" y="746.1999999999999" font-size="10.4" fill="#4a505a" text-anchor="end" >12,006</text>
<text x="947.8" y="746.1999999999999" font-size="10.4" fill="#4a505a" text-anchor="end" >11,367</text>
<text x="1022.8" y="746.1999999999999" font-size="10.4" fill="#4a505a" text-anchor="end" >10,919</text>
<text x="1097.8" y="746.1999999999999" font-size="10.4" fill="#4a505a" text-anchor="end" >14,367</text>
<text x="1172.8" y="746.1999999999999" font-size="10.4" fill="#4a505a" text-anchor="end" >11,620</text>
<text x="1247.8" y="746.1999999999999" font-size="10.4" fill="#4a505a" text-anchor="end" >14,009</text>
<text x="1322.8" y="746.1999999999999" font-size="10.4" fill="#4a505a" text-anchor="end" >144,005</text>
<rect x="169" y="752.4" width="1081" height="19" fill="#ccffff" />
<rect x="27" y="771.4" width="1298" height="1.6" fill="#d5d8de" />
<text x="47.4" y="769.0" font-size="10.4" fill="#4a505a" textLength="83.8" lengthAdjust="spacingAndGlyphs" >Regression Model</text>
<text x="422.8" y="766.1999999999999" font-size="10.4" fill="#4a505a" text-anchor="end" >10,462</text>
<text x="497.8" y="766.1999999999999" font-size="10.4" fill="#4a505a" text-anchor="end" >9,730</text>
<text x="572.8" y="766.1999999999999" font-size="10.4" fill="#4a505a" text-anchor="end" >12,919</text>
<text x="647.8" y="766.1999999999999" font-size="10.4" fill="#4a505a" text-anchor="end" >11,611</text>
<text x="722.8" y="766.1999999999999" font-size="10.4" fill="#4a505a" text-anchor="end" >11,821</text>
<text x="797.8" y="766.1999999999999" font-size="10.4" fill="#4a505a" text-anchor="end" >13,308</text>
<text x="872.8" y="766.1999999999999" font-size="10.4" fill="#4a505a" text-anchor="end" >15,197</text>
<text x="947.8" y="766.1999999999999" font-size="10.4" fill="#4a505a" text-anchor="end" >14,326</text>
<text x="1022.8" y="766.1999999999999" font-size="10.4" fill="#4a505a" text-anchor="end" >15,686</text>
<text x="1097.8" y="766.1999999999999" font-size="10.4" fill="#4a505a" text-anchor="end" >14,874</text>
<text x="1172.8" y="766.1999999999999" font-size="10.4" fill="#4a505a" text-anchor="end" >13,813</text>
<text x="1247.8" y="766.1999999999999" font-size="10.4" fill="#4a505a" text-anchor="end" >15,751</text>
<text x="1322.8" y="766.1999999999999" font-size="10.4" fill="#4a505a" text-anchor="end" >159,498</text>
<rect x="27" y="791.4" width="1298" height="1.6" fill="#d5d8de" />
<text x="47.4" y="789.0" font-size="10.4" fill="#4a505a" textLength="103.5" lengthAdjust="spacingAndGlyphs" >Driver Based Forecast</text>
<text x="422.8" y="786.1999999999999" font-size="10.4" fill="#4a505a" text-anchor="end" >12,351</text>
<text x="497.8" y="786.1999999999999" font-size="10.4" fill="#4a505a" text-anchor="end" >11,446</text>
<text x="572.8" y="786.1999999999999" font-size="10.4" fill="#4a505a" text-anchor="end" >11,531</text>
<text x="647.8" y="786.1999999999999" font-size="10.4" fill="#4a505a" text-anchor="end" >11,528</text>
<text x="722.8" y="786.1999999999999" font-size="10.4" fill="#4a505a" text-anchor="end" >12,168</text>
<text x="797.8" y="786.1999999999999" font-size="10.4" fill="#4a505a" text-anchor="end" >11,869</text>
<text x="872.8" y="786.1999999999999" font-size="10.4" fill="#4a505a" text-anchor="end" >12,385</text>
<text x="947.8" y="786.1999999999999" font-size="10.4" fill="#4a505a" text-anchor="end" >12,483</text>
<text x="1022.8" y="786.1999999999999" font-size="10.4" fill="#4a505a" text-anchor="end" >12,907</text>
<text x="1097.8" y="786.1999999999999" font-size="10.4" fill="#4a505a" text-anchor="end" >13,417</text>
<text x="1172.8" y="786.1999999999999" font-size="10.4" fill="#4a505a" text-anchor="end" >13,550</text>
<text x="1247.8" y="786.1999999999999" font-size="10.4" fill="#4a505a" text-anchor="end" >13,848</text>
<text x="1322.8" y="786.1999999999999" font-size="10.4" fill="#4a505a" text-anchor="end" >149,484</text>
<rect x="168.9" y="685.6" width="181" height="2.4" fill="#fcc89a" />
<rect x="165" y="689.4" width="3" height="22.2" fill="#fcc89a" />
<rect x="169.2" y="689.6" width="179.8" height="20.8" fill="#fff" stroke="#0a6ec8" stroke-width="2.4"/>
<rect x="170.6" y="708.6" width="177" height="0.8" fill="#fcd7b5" />
<rect x="331.6" y="693.4" width="12.8" height="13.2" rx="3" fill="#fff" stroke="#d0d0d0" stroke-width="0.9"/>
<path d="M335.2 698.6 H341 L338.1 701.8 Z" fill="#111"/>
<rect x="346.6" y="706.8" width="5.8" height="5.8" fill="#22b222" />
<text x="216.6" y="702.8" font-size="10.4" fill="#4a505a" textLength="82.1" lengthAdjust="spacingAndGlyphs" >Regression Model</text>
<rect x="1513" y="164" width="15.8" height="655" fill="#f4f4f4" />
<path d="M1517.2 175.8 L1521 171.6 L1524.8 175.8 Z" fill="#a3a3a3"/>
<rect x="1514.4" y="181.6" width="13.6" height="101.6" fill="#c1c1c1" />
<path d="M1517.2 807.6 L1521 811.8 L1524.8 807.6 Z" fill="#333"/>
<rect x="22.5" y="819.2" width="1491" height="16" fill="#f1f1f1" />
<rect x="22.5" y="819.2" width="24.5" height="16" fill="#f5f5f5" />
<path d="M34.6 823.4 L30.4 827.4 L34.6 831.4 Z" fill="#222"/>
<rect x="47" y="820.6" width="671" height="13.4" fill="#c1c1c1" />
<path d="M1502.6 823.4 L1506.8 827.4 L1502.6 831.4 Z" fill="#222"/>
<rect x="1513" y="819.4" width="15.8" height="16" fill="#dedede" />
<rect x="7" y="834.8" width="1523" height="1.2" fill="#d6d6d6" />
<rect x="7.5" y="836" width="1521.5" height="20.2" fill="#fafafa" />
<rect x="6.4" y="856.2" width="1524" height="1.4" fill="#dcdcdc" />
<g fill="none" stroke="#d4d4d4" stroke-width="3.2" stroke-linejoin="miter"><path d="M15.6 839.4 L10.6 845.4 L15.6 851.4 M25.6 839.4 L20.6 845.4 L25.6 851.4 M40.4 839.4 L35.4 845.4 L40.4 851.4 M53.4 839.4 L58.4 845.4 L53.4 851.4 M68.4 839.4 L73.4 845.4 L68.4 851.4 M78.6 839.4 L83.6 845.4 L78.6 851.4"/></g>
<path d="M97 840.4 V851.4 M91.4 845.9 H102.6" stroke="#2a2a2a" stroke-width="3"/>
<path d="M111.6 835.6 V849.6 Q111.6 852.6 114.6 852.6 H212.8 Q215.8 852.6 215.8 849.6 V835.6" fill="#fff" stroke="#d6d6d6" stroke-width="1"/>
<text x="116.3" y="848.2" font-size="11.4" fill="#666" textLength="94.4" lengthAdjust="spacingAndGlyphs" >User Growth Model</text>
<path d="M220.6 835.6 V849.6 Q220.6 852.6 223.6 852.6 H334.4 Q337.4 852.6 337.4 849.6 V835.6" fill="#fff" stroke="#d6d6d6" stroke-width="1"/>
<text x="225.2" y="848.2" font-size="11.4" fill="#2b8ad8" textLength="107" lengthAdjust="spacingAndGlyphs" >Revenue Growth Plan</text>
<rect x="1377.2" y="836" width="1" height="20.4" fill="#dadada" />
<rect x="1378.2" y="836" width="151" height="20.2" fill="#ffffff" />
<text x="1382" y="850.2" font-size="11" fill="#333" font-weight="bold" textLength="143" lengthAdjust="spacingAndGlyphs" >Average: 0 Count: 0 Sum: 0</text>
<text x="989.6" y="230.8" font-size="10.3" fill="#4a505a" textLength="130" lengthAdjust="spacingAndGlyphs" >Revenue Model Comparison</text>
<polygon points="725,233.2 1382,233.2 1385,237.2 725,237.2" fill="#3a4862"/>
<rect x="725" y="237.2" width="449.6" height="248" fill="#f2f2f2" />
<rect x="725" y="472.90000000000003" width="677" height="1.4" fill="#e0e0e0" />
<text x="709.9" y="478.1" font-size="14.2" fill="#808080" text-anchor="end" textLength="43.6" lengthAdjust="spacingAndGlyphs" >20,000</text>
<rect x="725" y="422.2" width="677" height="1.4" fill="#e0e0e0" />
<text x="709.9" y="426.8" font-size="14.2" fill="#808080" text-anchor="end" textLength="43.6" lengthAdjust="spacingAndGlyphs" >30,000</text>
<rect x="725" y="372.2" width="677" height="1.4" fill="#e0e0e0" />
<text x="709.9" y="376.8" font-size="14.2" fill="#808080" text-anchor="end" textLength="43.6" lengthAdjust="spacingAndGlyphs" >40,000</text>
<rect x="725" y="321.5" width="677" height="1.4" fill="#e0e0e0" />
<text x="709.9" y="326.3" font-size="14.2" fill="#808080" text-anchor="end" textLength="43.6" lengthAdjust="spacingAndGlyphs" >50,000</text>
<rect x="725" y="269.7" width="677" height="1.4" fill="#e0e0e0" />
<text x="709.9" y="276.1" font-size="14.2" fill="#808080" text-anchor="end" textLength="43.6" lengthAdjust="spacingAndGlyphs" >60,000</text>
<text x="752.3" y="494.9" font-size="13.6" fill="#808080" text-anchor="middle" textLength="41.6" lengthAdjust="spacingAndGlyphs" >Y17Q1</text>
<text x="808.6999999999999" y="494.9" font-size="13.6" fill="#808080" text-anchor="middle" textLength="41.6" lengthAdjust="spacingAndGlyphs" >Y17Q2</text>
<text x="865.0999999999999" y="494.9" font-size="13.6" fill="#808080" text-anchor="middle" textLength="41.6" lengthAdjust="spacingAndGlyphs" >Y17Q3</text>
<text x="921.4999999999999" y="494.9" font-size="13.6" fill="#808080" text-anchor="middle" textLength="41.6" lengthAdjust="spacingAndGlyphs" >Y17Q4</text>
<text x="977.9" y="494.9" font-size="13.6" fill="#808080" text-anchor="middle" textLength="41.6" lengthAdjust="spacingAndGlyphs" >Y18Q1</text>
<text x="1034.3000000000002" y="494.9" font-size="13.6" fill="#808080" text-anchor="middle" textLength="41.6" lengthAdjust="spacingAndGlyphs" >Y18Q2</text>
<text x="1090.7" y="494.9" font-size="13.6" fill="#808080" text-anchor="middle" textLength="41.6" lengthAdjust="spacingAndGlyphs" >Y18Q3</text>
<text x="1147.1000000000001" y="494.9" font-size="13.6" fill="#808080" text-anchor="middle" textLength="41.6" lengthAdjust="spacingAndGlyphs" >Y18Q4</text>
<text x="1203.5" y="494.9" font-size="13.6" fill="#808080" text-anchor="middle" textLength="41.6" lengthAdjust="spacingAndGlyphs" >Y19Q1</text>
<text x="1259.9" y="494.9" font-size="13.6" fill="#808080" text-anchor="middle" textLength="41.6" lengthAdjust="spacingAndGlyphs" >Y19Q2</text>
<text x="1316.3000000000002" y="494.9" font-size="13.6" fill="#808080" text-anchor="middle" textLength="41.6" lengthAdjust="spacingAndGlyphs" >Y19Q3</text>
<text x="1372.7" y="494.9" font-size="13.6" fill="#808080" text-anchor="middle" textLength="41.6" lengthAdjust="spacingAndGlyphs" >Y19Q4</text>
<rect x="735.9" y="424.5" width="17" height="49.0" fill="#2f8ceb" />
<rect x="792.3" y="462.5" width="17" height="11.0" fill="#2f8ceb" />
<rect x="848.7" y="359.8" width="17" height="113.7" fill="#2f8ceb" />
<rect x="905.1" y="380.6" width="17" height="92.9" fill="#2f8ceb" />
<rect x="961.5" y="415.6" width="17" height="57.9" fill="#2f8ceb" />
<rect x="1017.9" y="405.8" width="17" height="67.7" fill="#2f8ceb" />
<rect x="1074.3" y="360.8" width="17" height="112.7" fill="#2f8ceb" />
<rect x="1130.7" y="376.7" width="17" height="96.8" fill="#2f8ceb" />
<rect x="1204.1" y="407.7" width="17" height="65.8" fill="#ea6262" />
<rect x="1260.5" y="389.6" width="17" height="83.9" fill="#ea6262" />
<rect x="1316.9" y="346.9" width="17" height="126.6" fill="#ea6262" />
<rect x="1373.3" y="350.4" width="17" height="123.1" fill="#ea6262" />
<line x1="1169.4" y1="262.9" x2="1169.4" y2="485" stroke="#505050" stroke-width="1.6" stroke-dasharray="13 7"/>
<clipPath id="plot"><rect x="725" y="237" width="680" height="237"/></clipPath>
<polyline points="752.9,430.8 809.3,491 865.7,374 922.1,421.9 978.5,397.5 1034.9,450.4 1091.3,366.25 1147.7,380.2 1204.1,391.7 1260.5,403.75 1316.9,401 1373.3,371.9" fill="none" stroke="#83d64a" stroke-width="2.4" stroke-linejoin="miter" clip-path="url(#plot)"/>
<polyline points="752.9,415 809.3,438.1 865.7,354.6 922.1,389.6 978.5,387 1034.9,426.5 1091.3,369.4 1147.7,360.4 1204.1,407.0 1260.5,388.5 1316.9,345.4 1373.3,349.6" fill="none" stroke="#f8d748" stroke-width="2.4" stroke-linejoin="miter" clip-path="url(#plot)"/>
<polyline points="752.9,440.6 809.3,430.2 865.7,325 922.1,350 978.5,369.4 1034.9,405.2 1091.3,333.75 1147.7,338.5 1204.1,395.8 1260.5,394.8 1316.9,383.3 1373.3,367.7" fill="none" stroke="#22d2cc" stroke-width="2.4" stroke-linejoin="miter" clip-path="url(#plot)"/>
<rect x="1422" y="351.7" width="16" height="11.7" fill="#2f8ceb" />
<rect x="1422" y="366" width="16" height="11" fill="#ea6262" />
<rect x="1422" y="385.4" width="16" height="2.6" fill="#83d64a" />
<rect x="1422" y="399.1" width="16" height="2.6" fill="#f8d748" />
<rect x="1422" y="413.2" width="16" height="2.6" fill="#22d2cc" />
<clipPath id="leg"><rect x="1400" y="340" width="112" height="90"/></clipPath><g clip-path="url(#leg)">
<text x="1443.8" y="362" font-size="10.8" fill="#555" textLength="44.3" lengthAdjust="spacingAndGlyphs" >Historical</text>
<text x="1443.8" y="376.5" font-size="10.8" fill="#555" textLength="65.6" lengthAdjust="spacingAndGlyphs" >Final Forecast</text>
<text x="1443.8" y="390.5" font-size="10.8" fill="#555" textLength="73" lengthAdjust="spacingAndGlyphs" >Moving Average</text>
<text x="1443.8" y="404.4" font-size="10.8" fill="#555" textLength="51.5" lengthAdjust="spacingAndGlyphs" >Regression</text>
<text x="1443.8" y="418.1" font-size="10.8" fill="#555" textLength="60.4" lengthAdjust="spacingAndGlyphs" >Driver Based</text>
</g>
</svg></body></html>
